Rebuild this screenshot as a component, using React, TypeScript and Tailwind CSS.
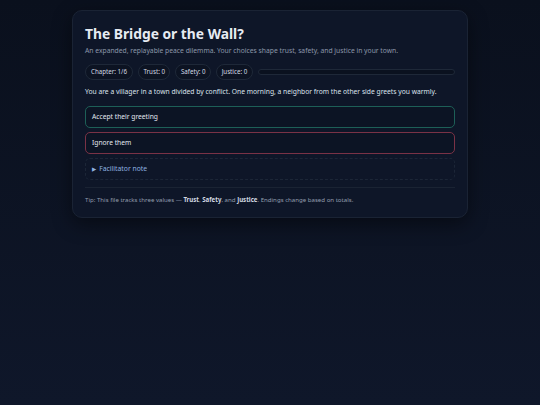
export default function App() {
  return (
    <div
      className="min-h-[405px] w-full bg-gradient-to-b from-[#0a101d] to-[#0f172a] pt-[10px]"
      style={{ fontFamily: '"Noto Sans", "DejaVu Sans", sans-serif' }}
    >
      <div className="mx-auto w-[396px] rounded-[10px] border border-[#1a2334] bg-[#0e1628] px-[12px] pt-[14px] pb-[12px] shadow-[0_6px_20px_rgba(0,0,0,0.45)]">
        <h1 className="text-[13.8px] font-bold leading-[18px] text-[#e6ebf2]">The Bridge or the Wall?</h1>
        <p className="mt-[3px] text-[6.75px] leading-[10px] text-[#8c97a8]">
          An expanded, replayable peace dilemma. Your choices shape trust, safety, and justice in your town.
        </p>

        <div className="mt-[8px] flex items-center gap-[5px]">
          <span className="rounded-full border border-[#1e2838] bg-[#0c1322] px-[5px] py-[3px] text-[6.2px] leading-[8px] text-[#d4dae3]">Chapter: 1/6</span>
          <span className="rounded-full border border-[#1e2838] bg-[#0c1322] px-[4.5px] py-[3px] text-[6.2px] leading-[8px] text-[#d4dae3]">Trust: 0</span>
          <span className="rounded-full border border-[#1e2838] bg-[#0c1322] px-[4.5px] py-[3px] text-[6.2px] leading-[8px] text-[#d4dae3]">Safety: 0</span>
          <span className="rounded-full border border-[#1e2838] bg-[#0c1322] px-[4.5px] py-[3px] text-[6.2px] leading-[8px] text-[#d4dae3]">Justice: 0</span>
          <div className="h-[6px] flex-1 rounded-full border border-[#1e2838] bg-[#0a111f]">
            <div className="h-full w-0 rounded-full bg-[#22c55e]" />
          </div>
        </div>

        <p className="mt-[7px] text-[6.72px] leading-[10px] text-[#dde3ec]">
          You are a villager in a town divided by conflict. One morning, a neighbor from the other side greets you warmly.
        </p>

        <div className="mt-[9px] flex flex-col gap-[4px]">
          <button className="h-[22px] rounded-[5px] border border-[#1d5f57] bg-[#0c1424] px-[6px] text-left text-[6.7px] text-[#e2e8f0]">
            Accept their greeting
          </button>
          <button className="h-[22px] rounded-[5px] border border-[#7a3246] bg-[#0c1424] px-[6px] text-left text-[6.7px] text-[#e2e8f0]">
            Ignore them
          </button>
          <div className="flex h-[22px] items-center rounded-[5px] border border-dashed border-[#1c2637] px-[6px] text-[6.8px] text-[#8fb3e0]">
            <span className="mr-[3px] text-[5.5px] text-[#8fb3e0]">▶</span>
            Facilitator note
          </div>
        </div>

        <div className="mt-[7px] border-t border-[#1a2333]" />

        <p className="mt-[7px] text-[6.1px] leading-[10px] text-[#939eae]">
          Tip: This file tracks three values — <b className="font-bold text-[#d4dae3]">Trust</b>,{" "}
          <b className="font-bold text-[#d4dae3]">Safety</b>, and <b className="font-bold text-[#d4dae3]">Justice</b>. Endings
          change based on totals.
        </p>
      </div>
    </div>
  );
}
